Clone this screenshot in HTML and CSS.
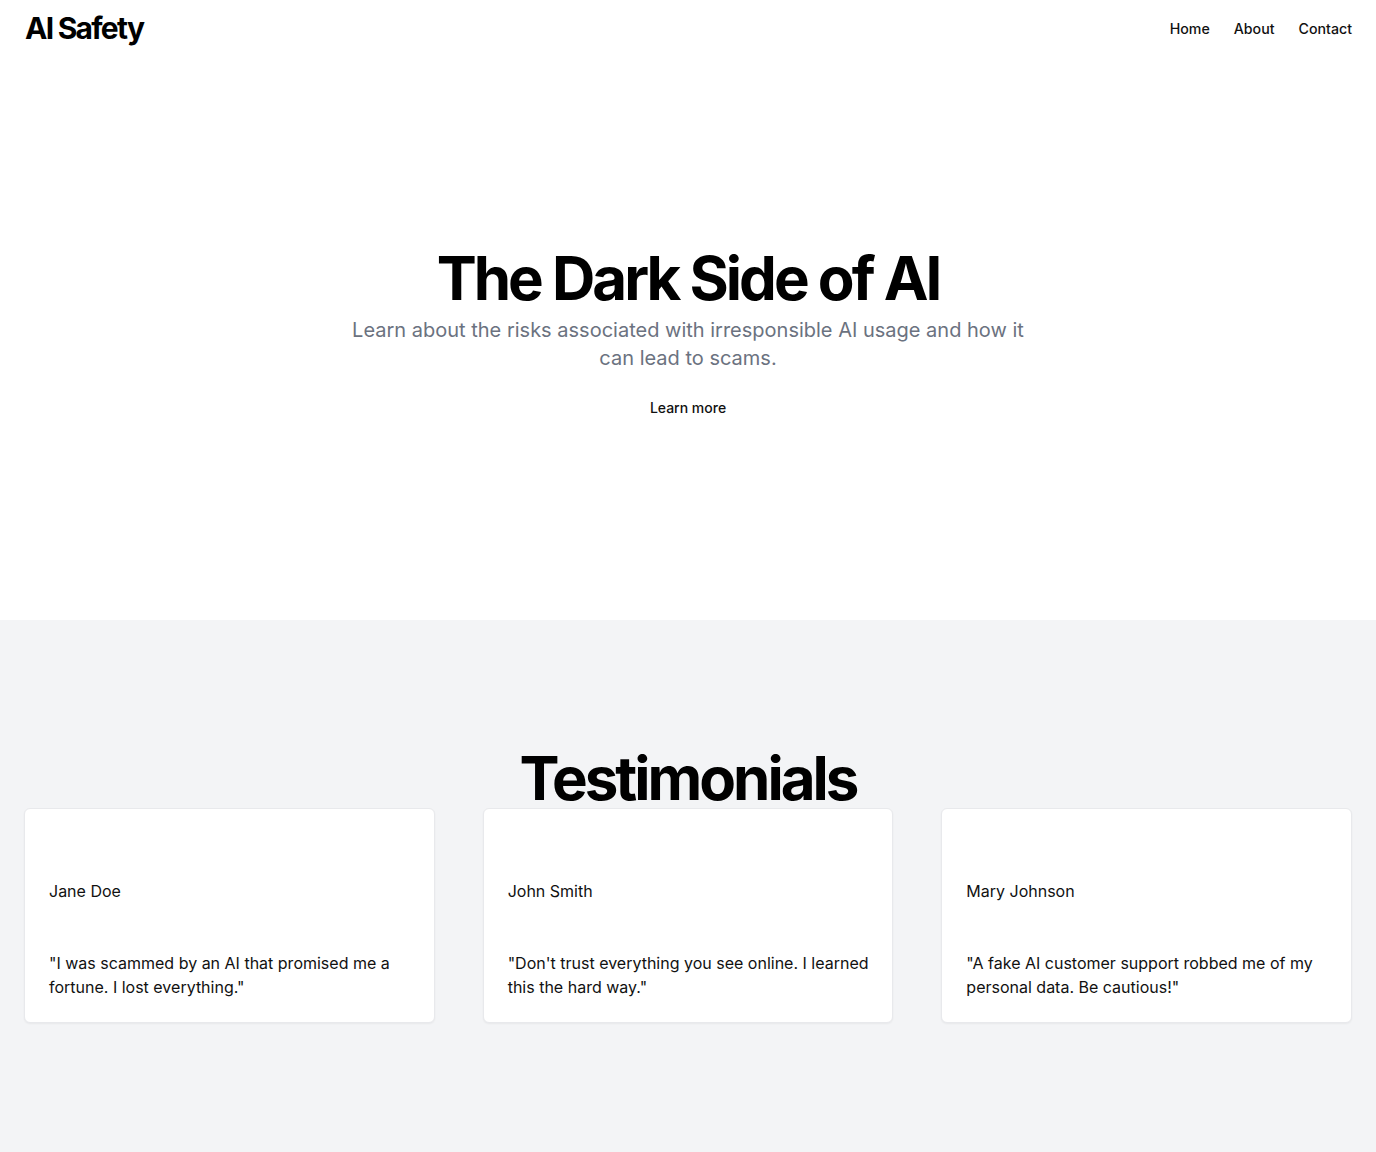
FILE: index.html
```html
<!DOCTYPE html>
<html lang="en">
<head>
<meta charset="utf-8">
<title>AI Safety</title>
<link rel="stylesheet" href="styles.css">
</head>
<body>
<header class="site-header">
  <a class="logo" href="#">AI Safety</a>
  <nav class="nav">
    <a href="#">Home</a>
    <a href="#">About</a>
    <a href="#">Contact</a>
  </nav>
</header>
<main>
  <section class="hero">
    <h1 class="hero-title">The Dark Side of AI</h1>
    <p class="hero-sub">Learn about the risks associated with irresponsible AI usage and how it can lead to scams.</p>
    <a class="btn-link" href="#">Learn more</a>
  </section>
  <section class="testimonials">
    <h2 class="section-title">Testimonials</h2>
    <div class="cards">
      <div class="card">
        <p class="card-name">Jane Doe</p>
        <p class="card-quote">"I was scammed by an AI that promised me a fortune. I lost everything."</p>
      </div>
      <div class="card">
        <p class="card-name">John Smith</p>
        <p class="card-quote">"Don't trust everything you see online. I learned this the hard way."</p>
      </div>
      <div class="card">
        <p class="card-name">Mary Johnson</p>
        <p class="card-quote">"A fake AI customer support robbed me of my personal data. Be cautious!"</p>
      </div>
    </div>
  </section>
</main>
</body>
</html>
```

FILE: styles.css
```css
* { box-sizing: border-box; }
html, body { margin: 0; padding: 0; }
body {
  font-family: Inter, "Noto Sans", sans-serif;
  color: #0a0a0a;
  background: #ffffff;
}
a { color: inherit; text-decoration: none; }

.site-header {
  height: 56px;
  padding: 0 24px 0 25px;
  display: flex;
  align-items: center;
  justify-content: space-between;
}
.logo {
  font-size: 30px;
  font-weight: 700;
  letter-spacing: -0.058em;
  line-height: 1;
  color: #000;
}
.nav {
  display: flex;
  gap: 24px;
}
.nav a {
  font-size: 14.2px;
  font-weight: 500;
  color: #111;
}

.hero {
  height: 564px;
  padding-top: 192px;
  display: flex;
  flex-direction: column;
  align-items: center;
  text-align: center;
}
.hero-title {
  margin: 0;
  font-size: 60px;
  line-height: 60px;
  font-weight: 700;
  letter-spacing: -0.05em;
  color: #000;
}
.hero-sub {
  margin: 8px 0 0;
  max-width: 700px;
  font-size: 20px;
  line-height: 28px;
  color: #6b7280;
}
.btn-link {
  margin-top: 17px;
  height: 36px;
  padding: 0 16px;
  display: inline-flex;
  align-items: center;
  font-size: 14px;
  font-weight: 500;
  color: #111;
}

.testimonials {
  background: #f3f4f6;
  padding: 128px 24px 129px;
}
.section-title {
  margin: 0;
  text-align: center;
  font-size: 60px;
  line-height: 60px;
  font-weight: 700;
  letter-spacing: -0.05em;
  color: #000;
}
.cards {
  display: grid;
  grid-template-columns: repeat(3, 1fr);
  gap: 48px;
}
.card {
  background: #fff;
  border: 1px solid #e8e9ec;
  border-radius: 6px;
  box-shadow: 0 1px 2px rgba(0,0,0,0.05);
  padding: 70px 20px 23px 24px;
}
.card-name {
  margin: 0;
  font-size: 16px;
  line-height: 24px;
  color: #111;
}
.card-quote {
  margin: 48px 0 0;
  font-size: 16px;
  line-height: 24px;
  color: #111;
}
```
